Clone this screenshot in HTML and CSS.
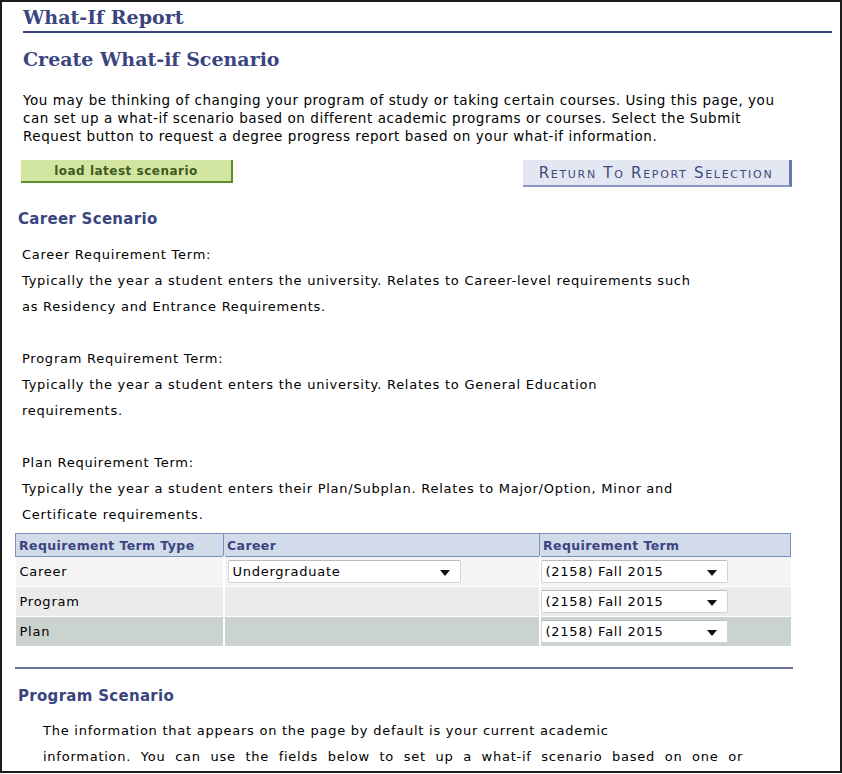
FILE: index.html
```html
<!DOCTYPE html>
<html>
<head>
<meta charset="utf-8">
<link rel="stylesheet" href="styles.css">
</head>
<body>
<div class="page">
  <div class="report-title">What-If Report</div>
  <div class="scenario-title">Create What-if Scenario</div>
  <div class="intro">
    <div>You may be thinking of changing your program of study or taking certain courses. Using this page, you</div>
    <div>can set up a what-if scenario based on different academic programs or courses. Select the Submit</div>
    <div>Request button to request a degree progress report based on your what-if information.</div>
  </div>
  <div class="button-row">
    <button class="btn-load">load latest scenario</button>
    <button class="btn-return">Return To Report Selection</button>
  </div>
  <h2 class="section-title">Career Scenario</h2>
  <div class="terms">
    <div class="term">
      <div>Career Requirement Term:</div>
      <div>Typically the year a student enters the university. Relates to Career-level requirements such</div>
      <div>as Residency and Entrance Requirements.</div>
    </div>
    <div class="term">
      <div>Program Requirement Term:</div>
      <div>Typically the year a student enters the university. Relates to General Education</div>
      <div>requirements.</div>
    </div>
    <div class="term">
      <div>Plan Requirement Term:</div>
      <div>Typically the year a student enters their Plan/Subplan. Relates to Major/Option, Minor and</div>
      <div>Certificate requirements.</div>
    </div>
  </div>
  <table class="grid">
    <thead>
      <tr><th class="c1">Requirement Term Type</th><th class="c2">Career</th><th class="c3">Requirement Term</th></tr>
    </thead>
    <tbody>
      <tr class="r1"><td>Career</td><td><div class="select sel-wide"><span>Undergraduate</span><i class="caret"></i></div></td><td><div class="select sel-term"><span>(2158) Fall 2015</span><i class="caret"></i></div></td></tr>
      <tr class="r2"><td>Program</td><td></td><td><div class="select sel-term"><span>(2158) Fall 2015</span><i class="caret"></i></div></td></tr>
      <tr class="r3"><td>Plan</td><td></td><td><div class="select sel-term"><span>(2158) Fall 2015</span><i class="caret"></i></div></td></tr>
    </tbody>
  </table>
  <hr class="divider">
  <h2 class="section-title program">Program Scenario</h2>
  <div class="program-text">
    <div>The information that appears on the page by default is your current academic</div>
    <div class="justify">information. You can use the fields below to set up a what-if scenario based on one or</div>
  </div>
</div>
</body>
</html>
```
FILE: styles.css
```css
html, body { margin: 0; padding: 0; background: #fff; }
.page {
  box-sizing: border-box;
  width: 842px;
  height: 773px;
  border: 2px solid #1c1c1c;
  overflow: hidden;
  font-family: "DejaVu Sans", Verdana, sans-serif;
  font-size: 13px;
  letter-spacing: 0.75px;
  color: #000;
  padding: 0 0 0 13px;
  white-space: nowrap;
}
.report-title {
  margin: 4px 8px 0 8px;
  font-family: "DejaVu Serif", Georgia, serif;
  font-weight: bold;
  font-size: 19px;
  letter-spacing: 0;
  color: #3a4580;
  line-height: 22px;
  padding-bottom: 3px;
  border-bottom: 2px solid #3a4580;
}
.scenario-title {
  margin: 13px 0 0 8px;
  font-family: "DejaVu Serif", Georgia, serif;
  font-weight: bold;
  font-size: 19px;
  letter-spacing: 0;
  color: #3a4580;
  line-height: 26px;
}
.intro {
  margin: 19px 0 0 8px;
  font-size: 13.5px;
  letter-spacing: 0.55px;
  line-height: 18px;
}
.button-row {
  display: flex;
  justify-content: space-between;
  align-items: flex-start;
  margin: 15px 48px 0 6px;
}
.btn-load {
  width: 212px;
  height: 23px;
  background: #d3e6a1;
  border: none;
  border-right: 2px solid #5e8c2a;
  border-bottom: 2px solid #5e8c2a;
  font-family: "DejaVu Sans", Verdana, sans-serif;
  font-weight: bold;
  font-size: 12px;
  letter-spacing: 0.5px;
  color: #3e5a1e;
  padding: 0;
}
.btn-return {
  width: 269px;
  height: 27px;
  background: #e3e7f1;
  border: none;
  border-right: 3px solid #6876b4;
  border-bottom: 2px solid #8a96c4;
  font-family: "DejaVu Sans", Verdana, sans-serif;
  font-variant: small-caps;
  font-size: 15px;
  letter-spacing: 1.7px;
  color: #3d4a7c;
  padding: 0;
}
.section-title {
  margin: 22px 0 0 3px;
  font-family: "DejaVu Sans", Verdana, sans-serif;
  font-weight: bold;
  font-size: 15px;
  letter-spacing: 0.3px;
  color: #3a4580;
  line-height: 20px;
}
.terms {
  margin: 13px 0 0 7px;
  display: flex;
  flex-direction: column;
  gap: 26px;
}
.term div { line-height: 26px; }
.grid {
  margin-top: 5px;
  width: 776px;
  border-collapse: collapse;
  font-family: "DejaVu Sans", Verdana, sans-serif;
  font-size: 13px;
  letter-spacing: 0.75px;
}
.grid th {
  background: #d2dbea;
  border: 1px solid #7b91c2;
  color: #3a4580;
  text-align: left;
  font-weight: bold;
  font-size: 12.5px;
  letter-spacing: 0.4px;
  height: 22px;
  padding: 0 3px;
}
.grid th.c1 { width: 201px; }
.grid th.c2 { width: 309px; }
.grid td {
  padding: 0 3px;
  border-right: 2px solid #fff;
  border-bottom: 1px solid #fff;
  height: 29px;
}
.grid td:first-child { padding-left: 4px; }
.grid td:last-child { padding-left: 0; border-right: none; }
.r1 td { background: #f4f4f4; }
.r2 td { background: #ebebeb; }
.r3 td { background: #cbd3cf; }
.select {
  box-sizing: border-box;
  height: 23px;
  background: #fff;
  border: 1px solid #d4d4d4;
  border-top-color: #bdbdbd;
  border-radius: 2px;
  display: flex;
  align-items: center;
  justify-content: space-between;
  padding: 0 10px 0 4px;
}
.sel-wide { width: 233px; }
.sel-term { width: 187px; }
.caret {
  width: 0; height: 0;
  border-left: 5px solid transparent;
  border-right: 5px solid transparent;
  border-top: 6px solid #111;
  margin-top: 2px;
}
.divider {
  margin: 20px 0 0 0;
  width: 778px;
  border: none;
  height: 2px;
  background: #6a72a0;
}
.section-title.program { margin-top: 17px; }
.program-text {
  margin: 12px 0 0 28px;
}
.program-text div { line-height: 26px; }
.program-text .justify {
  width: 700px;
  white-space: normal;
  text-align: justify;
  text-align-last: justify;
}
```
